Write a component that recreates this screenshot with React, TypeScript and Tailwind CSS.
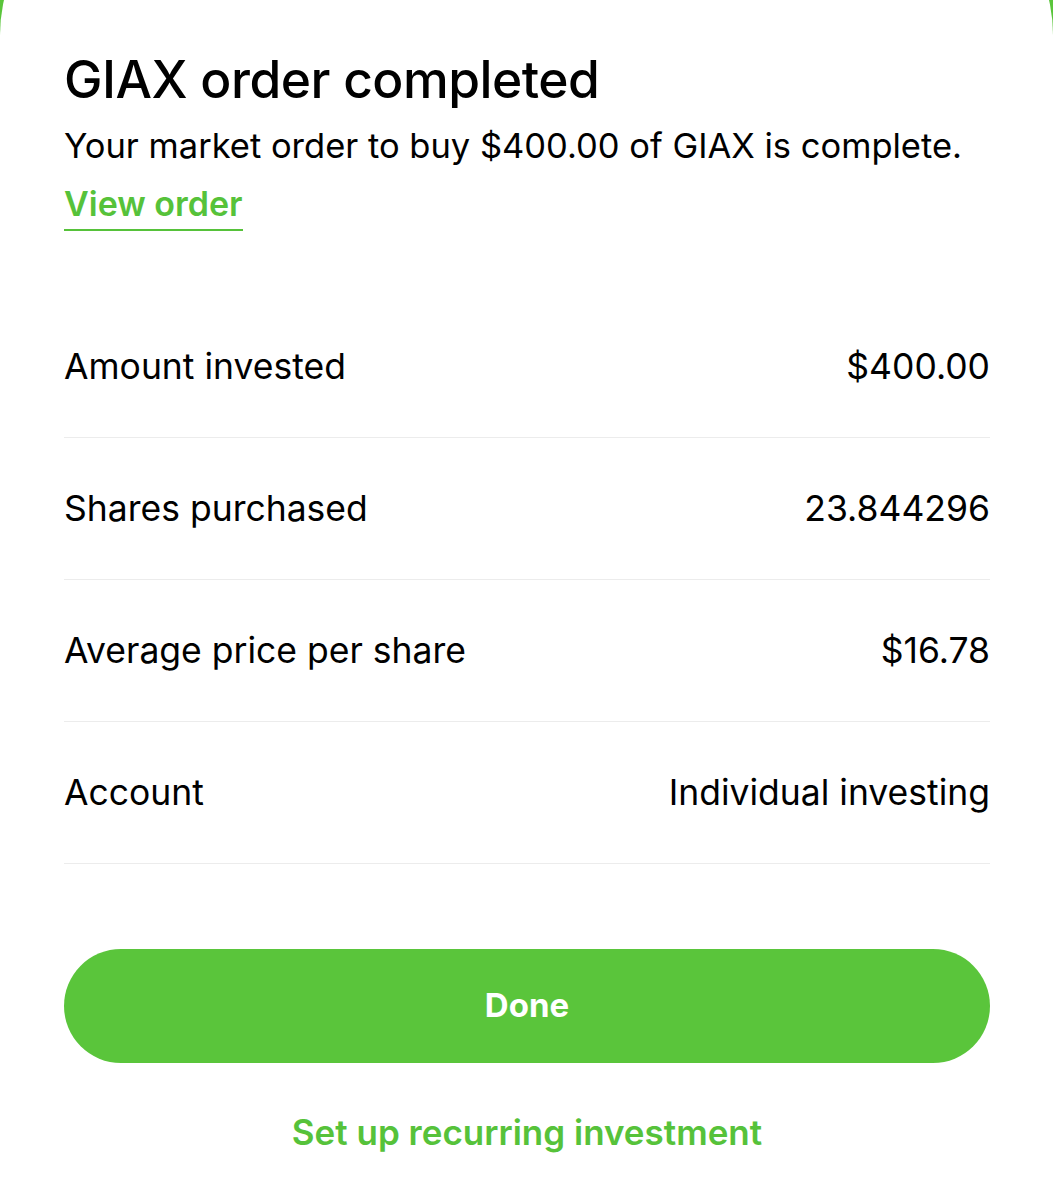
import React from "react";

const rows = [
  { label: "Amount invested", value: "$400.00" },
  { label: "Shares purchased", value: "23.844296" },
  { label: "Average price per share", value: "$16.78" },
  { label: "Account", value: "Individual investing" },
];

function App() {
  return (
    <div className="w-full h-[1200px] overflow-hidden bg-[#5ac53b] font-['Inter',sans-serif]">
      <div className="-mt-[120px] h-[1320px] bg-white rounded-t-[155px] pt-[120px]">
        <div className="px-[64px] pr-[63px] pt-[49px]">
          <h1 className="text-[51.5px] leading-[60px] font-medium text-black tracking-[-0.5px]">
            GIAX order completed
          </h1>
          <p className="mt-[17px] text-[34.5px] leading-[40px] text-black">
            Your market order to buy $400.00 of GIAX is complete.
          </p>
          <a
            href="#"
            className="inline-block mt-[18px] pb-[5px] text-[34px] leading-[40px] font-semibold text-[#56c23a] border-b-2 border-[#56c23a]"
          >
            View order
          </a>

          <div className="mt-[65px]">
            {rows.map((r) => (
              <div
                key={r.label}
                className="h-[142px] flex items-center justify-between border-b border-[#ececec] text-[35.5px] text-black"
              >
                <span>{r.label}</span>
                <span>{r.value}</span>
              </div>
            ))}
          </div>

          <button className="mt-[85px] w-full h-[114px] rounded-full bg-[#5ac53b] text-white text-[33px] font-bold">
            Done
          </button>

          <div className="mt-[49px] text-center text-[35px] leading-[40px] font-semibold text-[#56c23a]">
            Set up recurring investment
          </div>
        </div>
      </div>
    </div>
  );
}

export default App;
